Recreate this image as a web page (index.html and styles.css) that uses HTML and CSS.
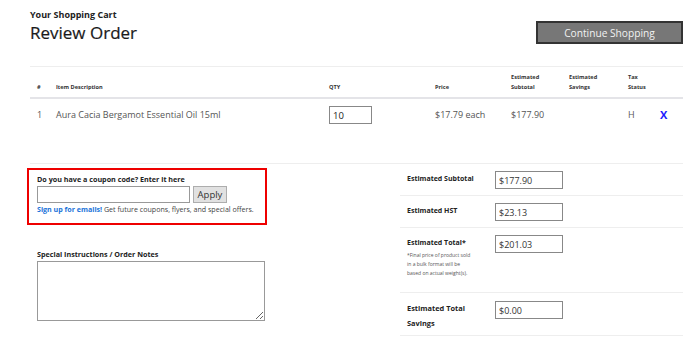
FILE: index.html
```html
<!DOCTYPE html>
<html lang="en">
<head>
    <meta charset="UTF-8">
    <meta name="viewport" content="width=device-width, initial-scale=1.0">
    <title>Review Order</title>
    <link rel="stylesheet" href="styles.css">
</head>
<body>
    <div class="page">
        <div class="page-head">
            <div>
                <div class="cart-label">Your Shopping Cart</div>
                <h1>Review Order</h1>
            </div>
            <button class="continue-btn" type="button">Continue Shopping</button>
        </div>

        <table class="cart-table">
            <colgroup>
                <col class="c-num">
                <col class="c-item">
                <col class="c-qty">
                <col class="c-price">
                <col class="c-sub">
                <col class="c-save">
                <col class="c-tax">
                <col class="c-del">
            </colgroup>
            <thead>
                <tr>
                    <th>#</th>
                    <th>Item Description</th>
                    <th>QTY</th>
                    <th>Price</th>
                    <th>Estimated Subtotal</th>
                    <th>Estimated Savings</th>
                    <th>Tax Status</th>
                    <th></th>
                </tr>
            </thead>
            <tbody>
                <tr>
                    <td>1</td>
                    <td>Aura Cacia Bergamot Essential Oil 15ml</td>
                    <td><input class="qty-input" type="text" value="10"></td>
                    <td>$17.79 each</td>
                    <td>$177.90</td>
                    <td></td>
                    <td>H</td>
                    <td><a class="remove" href="#">X</a></td>
                </tr>
            </tbody>
        </table>

        <div class="lower">
            <div class="left-col">
                <div class="coupon">
                    <div class="field-label">Do you have a coupon code? Enter it here</div>
                    <div class="coupon-row">
                        <input class="coupon-input" type="text">
                        <button class="apply-btn" type="button">Apply</button>
                    </div>
                    <div class="signup"><a href="#">Sign up for emails!</a> Get future coupons, flyers, and special offers.</div>
                </div>

                <div class="notes">
                    <div class="field-label">Special Instructions / Order Notes</div>
                    <textarea class="notes-input"></textarea>
                </div>
            </div>

            <div class="summary">
                <div class="sum-row">
                    <div class="sum-label">Estimated Subtotal</div>
                    <input class="sum-input" type="text" value="$177.90">
                </div>
                <div class="sum-row">
                    <div class="sum-label">Estimated HST</div>
                    <input class="sum-input" type="text" value="$23.13">
                </div>
                <div class="sum-row total">
                    <div class="sum-label">
                        Estimated Total*
                        <div class="note">*Final price of product sold in a bulk format will be based on actual weight(s).</div>
                    </div>
                    <input class="sum-input" type="text" value="$201.03">
                </div>
                <div class="sum-row savings">
                    <div class="sum-label">Estimated Total Savings</div>
                    <input class="sum-input" type="text" value="$0.00">
                </div>
            </div>
        </div>
    </div>
</body>
</html>
```

FILE: styles.css
```css
body {
    margin: 0;
    font-family: "Open Sans", Arial, sans-serif;
    color: #333;
    background: #fff;
}
.page {
    padding: 8px 17px 0 30px;
}
.page-head {
    display: flex;
    justify-content: space-between;
    align-items: flex-start;
    height: 58px;
}
.cart-label {
    font-size: 9px;
    font-weight: bold;
    color: #222;
    line-height: 14px;
}
h1 {
    margin: 0;
    font-size: 17px;
    font-weight: normal;
    color: #1a1a1a;
    line-height: 22px;
    -webkit-text-stroke: 0.2px #1a1a1a;
}
.continue-btn {
    margin-top: 13px;
    width: 147px;
    height: 23px;
    background: #777;
    border: 2px solid #333;
    color: #f2f2f2;
    font-family: inherit;
    font-size: 10.2px;
    padding: 0;
}
.cart-table {
    width: 653px;
    table-layout: fixed;
    border-collapse: collapse;
    border-top: 1px solid #eee;
}
.c-num { width: 19px; }
.c-item { width: 273px; }
.c-qty { width: 106px; }
.c-price { width: 76px; }
.c-sub { width: 58px; }
.c-save { width: 59px; }
.c-tax { width: 32px; }
.c-del { width: 30px; }
.cart-table th {
    height: 25px;
    padding: 0 7px 5px;
    vertical-align: bottom;
    text-align: left;
    font-size: 5.6px;
    line-height: 10px;
    font-weight: bold;
    color: #333;
    border-bottom: 2px solid #e4e4e8;
}
.cart-table td {
    height: 57px;
    padding: 7px 7px 0;
    vertical-align: top;
    font-size: 9px;
    line-height: 18px;
    color: #555;
    border-bottom: 1px solid #eee;
}
.qty-input {
    box-sizing: border-box;
    width: 43px;
    height: 18px;
    border: 1px solid #888;
    padding: 0 3px;
    font-family: inherit;
    font-size: 9.5px;
    color: #222;
}
.remove {
    color: #1a1aff;
    font-weight: bold;
    font-size: 11px;
    text-decoration: none;
}
.lower {
    display: flex;
}
.left-col {
    width: 370px;
    margin-left: -3px;
}
.coupon {
    box-sizing: border-box;
    width: 240px;
    height: 57px;
    margin-top: 4px;
    border: 2px solid #e00;
    padding: 3px 8px 0;
}
.field-label {
    font-size: 7.2px;
    font-weight: bold;
    color: #222;
    line-height: 12px;
}
.coupon-row {
    display: flex;
    gap: 3px;
    margin-top: 1px;
}
.coupon-input {
    box-sizing: border-box;
    width: 153px;
    height: 17px;
    border: 1px solid #999;
}
.apply-btn {
    box-sizing: border-box;
    width: 34px;
    height: 17px;
    padding: 0;
    background: #e1e1e1;
    border: 1px solid #adadad;
    font-family: inherit;
    font-size: 9.5px;
    color: #333;
}
.signup {
    font-size: 7.1px;
    line-height: 13px;
    color: #444;
}
.signup a {
    color: #1a73d9;
    font-weight: bold;
    text-decoration: none;
}
.notes {
    margin-top: 23px;
    padding-left: 10px;
}
.notes-input {
    display: block;
    box-sizing: border-box;
    width: 228px;
    height: 60px;
    margin-top: 1px;
    border: 1px solid #999;
    resize: both;
}
.summary {
    width: 283px;
    margin-left: 3px;
}
.sum-row {
    display: flex;
    box-sizing: border-box;
    height: 32px;
    padding: 7px 0 0 7px;
    border-bottom: 1px solid #eee;
}
.sum-row.total {
    height: 65px;
}
.sum-row.savings {
    height: 43px;
    padding-top: 8px;
}
.sum-label {
    width: 78px;
    margin-right: 10px;
    font-size: 7px;
    font-weight: bold;
    color: #222;
    line-height: 16px;
}
.savings .sum-label {
    font-size: 7.4px;
    line-height: 15px;
}
.note {
    font-size: 5px;
    font-weight: normal;
    color: #555;
    line-height: 9px;
    width: 65px;
}
.sum-input {
    box-sizing: border-box;
    width: 68px;
    height: 18px;
    border: 1px solid #888;
    padding: 0 3px;
    font-family: inherit;
    font-size: 9px;
    color: #333;
}
```
